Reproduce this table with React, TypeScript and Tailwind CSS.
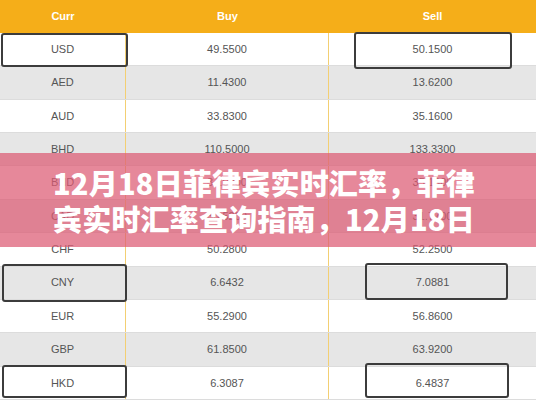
import React from "react";

const rows = [
  ["USD", "49.5500", "50.1500"],
  ["AED", "11.4300", "13.6200"],
  ["AUD", "33.8300", "35.1600"],
  ["BHD", "110.5000", "133.3300"],
  ["BND", "34.0900", "35.1900"],
  ["CAD", "30.5200", "31.7700"],
  ["CHF", "50.2800", "52.2500"],
  ["CNY", "6.6432", "7.0881"],
  ["EUR", "55.2900", "56.8600"],
  ["GBP", "61.8500", "63.9200"],
  ["HKD", "6.3087", "6.4837"],
];

const marks = [
  "left-[1px] top-[33px] w-[127px] h-[34px]",
  "left-[354px] top-[32px] w-[158px] h-[37px]",
  "left-[2px] top-[264px] w-[125px] h-[38px]",
  "left-[365px] top-[263px] w-[143px] h-[37px]",
  "left-[2px] top-[365px] w-[125px] h-[33px]",
  "left-[365px] top-[363px] w-[144px] h-[35px]",
];

const App = () => {
  return (
    <div className="relative w-[536px] h-[400px] overflow-hidden bg-white font-['Liberation_Sans',Arial,sans-serif]">
      <div className="flex flex-col h-full">
        <div className="grid grid-cols-[126px_203px_1fr] h-[33px] bg-[#f5ae19] text-white text-[11px] font-bold">
          <div className="flex items-center justify-center">Curr</div>
          <div className="flex items-center justify-center">Buy</div>
          <div className="flex items-center justify-center">Sell</div>
        </div>

        {rows.map((r, i) => (
          <div
            key={r[0]}
            className={`grid grid-cols-[126px_203px_1fr] flex-1 border-b border-[#dcdcdc] text-[11px] text-[#555] ${
              i % 2 === 1 ? "bg-[#e6e6e6]" : "bg-white"
            }`}
          >
            <div className="flex items-center justify-center border-r border-[#f3cf73]">{r[0]}</div>
            <div className="flex items-center justify-center border-r border-[#f3cf73]">{r[1]}</div>
            <div className="flex items-center justify-center">{r[2]}</div>
          </div>
        ))}
      </div>

      {marks.map((m) => (
        <div key={m} className={`absolute ${m} border-2 border-[#3c3c3c] rounded-[3px]`}></div>
      ))}

      <div className="absolute left-0 top-[153px] w-full h-[94px] bg-[rgba(220,90,115,0.72)] flex flex-col justify-center pl-[53px]">
        <div className="text-white text-[29px] leading-[36px] font-black tracking-[0.2px] font-['Noto_Sans_CJK_SC','Noto_Sans',sans-serif]">
          <div>12月18日菲律宾实时汇率，菲律</div>
          <div>宾实时汇率查询指南，12月18日</div>
        </div>
      </div>
    </div>
  );
};

export default App;
